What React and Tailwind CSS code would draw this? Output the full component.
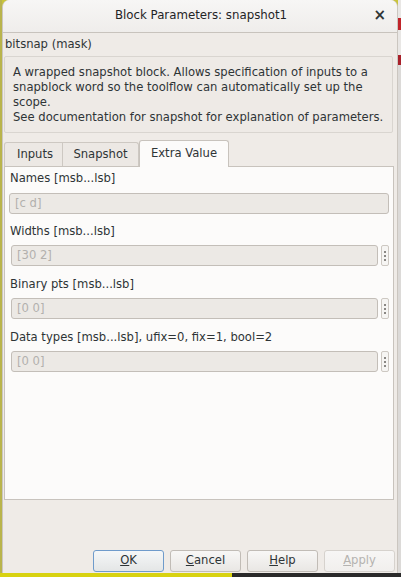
import React from "react";

function Field({ value, dots = true, wide = false }) {
  return (
    <div className="flex items-stretch gap-[3px] h-[21px]">
      <div
        className={`flex-1 flex items-center rounded-[3px] border border-[#c3beb8] bg-[#ece9e5] text-[#b2b0ad] px-[5px] ${wide ? "" : "ml-[2px]"}`}
      >
        {value}
      </div>
      {dots && (
        <div className="w-[8px] rounded-[2px] border border-[#cdc8c2] bg-[#f6f5f3] flex flex-col items-center justify-center gap-[2px]">
          <span className="block w-[2px] h-[2px] bg-[#8a8784]" />
          <span className="block w-[2px] h-[2px] bg-[#8a8784]" />
          <span className="block w-[2px] h-[2px] bg-[#8a8784]" />
        </div>
      )}
    </div>
  );
}

function Btn({ children, focus = false, disabled = false }) {
  return (
    <div
      className={`w-[71px] h-[22px] rounded-[3px] border flex items-center justify-center bg-gradient-to-b ${
        focus
          ? "border-[#6f9bcb] from-[#f5f7f8] to-[#e4e6e6]"
          : disabled
          ? "border-[#d6d2cd] from-[#f7f6f5] to-[#f1efed]"
          : "border-[#c1bcb6] from-[#f8f7f6] to-[#e9e7e4]"
      } ${disabled ? "text-[#b5b3b0]" : "text-[#2e3436]"}`}
    >
      {children}
    </div>
  );
}

export default function App() {
  return (
    <div
      className="w-[401px] h-[577px] flex flex-col bg-[#c9c43a] overflow-hidden text-[11.6px] text-[#2e3436]"
      style={{ fontFamily: '"DejaVu Sans", "Noto Sans", sans-serif' }}
    >
      <div className="flex flex-1 min-h-0">
        <div className="w-[2px] bg-[#b9b44c]" />
        <div className="w-[396px] flex flex-col bg-[#efebe7] rounded-t-[7px] border-x border-[#cbc6c0]">
          {/* title bar */}
          <div className="h-[33px] shrink-0 flex items-center relative rounded-t-[7px] bg-gradient-to-b from-[#f7f6f5] to-[#efedeb] border-b border-[#c8c3bd]">
            <div className="flex-1 text-center text-[11.8px] text-[#1f2426] pl-[2px]">
              Block Parameters: snapshot1
            </div>
            <div className="absolute right-[11px] top-[8px] text-[15px] font-bold text-[#2e3436] leading-none">
              ×
            </div>
          </div>

          <div className="px-[1px] flex-1 flex flex-col">
            <div className="h-[22px] flex items-center pl-[1px] pt-[1px]">bitsnap (mask)</div>
            <div className="mr-[3px] mt-[1px] border border-[#d9d5d0] rounded-[2px] bg-[#eeeae6] pl-[8px] pr-[2px] pt-[8px] pb-[4px] leading-[15px] h-[77px] whitespace-nowrap">
              <div>A wrapped snapshot block. Allows specification of inputs to a</div>
              <div>snapblock word so the toolflow can automatically set up the</div>
              <div>scope.</div>
              <div>See documentation for snapshot for explanation of parameters.</div>
            </div>

            {/* tabs */}
            <div className="mt-[6px] flex items-end h-[27px] relative z-10">
              <div className="w-[59px] h-[24px] flex items-center justify-center border border-b-0 border-[#cdc8c2] bg-[#ece8e4] rounded-tl-[3px] pl-[3px]">
                Inputs
              </div>
              <div className="w-[76px] h-[24px] flex items-center justify-center border border-l-0 border-b-0 border-[#cdc8c2] bg-[#ece8e4] rounded-tr-[3px]">
                Snapshot
              </div>
              <div className="w-[90px] h-[27px] -mb-[1px] flex items-center justify-center border border-b-0 border-[#c8c3bd] bg-[#fcfbfa] rounded-t-[3px] pb-[1px]">
                Extra Value
              </div>
            </div>
            <div className="w-[390px] h-[334px] border border-[#c8c3bd] bg-[#fcfbfa] px-[4px] pt-[3px]">
              <div className="h-[18px] flex items-center pl-[1px]">Names [msb...lsb]</div>
              <div className="mt-[5px]">
                <Field value="[c d]" dots={false} wide />
              </div>
              <div className="mt-[9px] h-[18px] flex items-center pl-[1px]">Widths [msb...lsb]</div>
              <div className="mt-[4px]">
                <Field value="[30 2]" />
              </div>
              <div className="mt-[10px] h-[18px] flex items-center pl-[1px]">Binary pts [msb...lsb]</div>
              <div className="mt-[4px]">
                <Field value="[0 0]" />
              </div>
              <div className="mt-[10px] h-[18px] flex items-center pl-[1px]">
                Data types [msb...lsb], ufix=0, fix=1, bool=2
              </div>
              <div className="mt-[4px]">
                <Field value="[0 0]" />
              </div>
            </div>

            <div className="flex-1" />
            <div className="flex justify-end gap-[6px] pr-[1px] pb-[1px]">
              <Btn focus>
                <span>
                  <span className="underline">O</span>K
                </span>
              </Btn>
              <Btn>
                <span>
                  <span className="underline">C</span>ancel
                </span>
              </Btn>
              <Btn>
                <span>
                  <span className="underline">H</span>elp
                </span>
              </Btn>
              <Btn disabled>
                <span>
                  <span className="underline">A</span>pply
                </span>
              </Btn>
            </div>
          </div>
        </div>
        <div className="flex-1 bg-[#e9e7e5] flex flex-col">
          <div className="h-[18px]" />
          <div className="h-[12px] bg-[#c0242a]" />
          <div className="h-[25px]" />
          <div className="h-[10px] bg-[#a8202a]" />
          <div className="flex-1 bg-[#dcdad8]" />
        </div>
      </div>
      <div className="h-[4px] flex shrink-0">
        <div className="w-[232px] bg-[#d8d210]" />
        <div className="flex-1 bg-[#2a2a2a]" />
      </div>
    </div>
  );
}
